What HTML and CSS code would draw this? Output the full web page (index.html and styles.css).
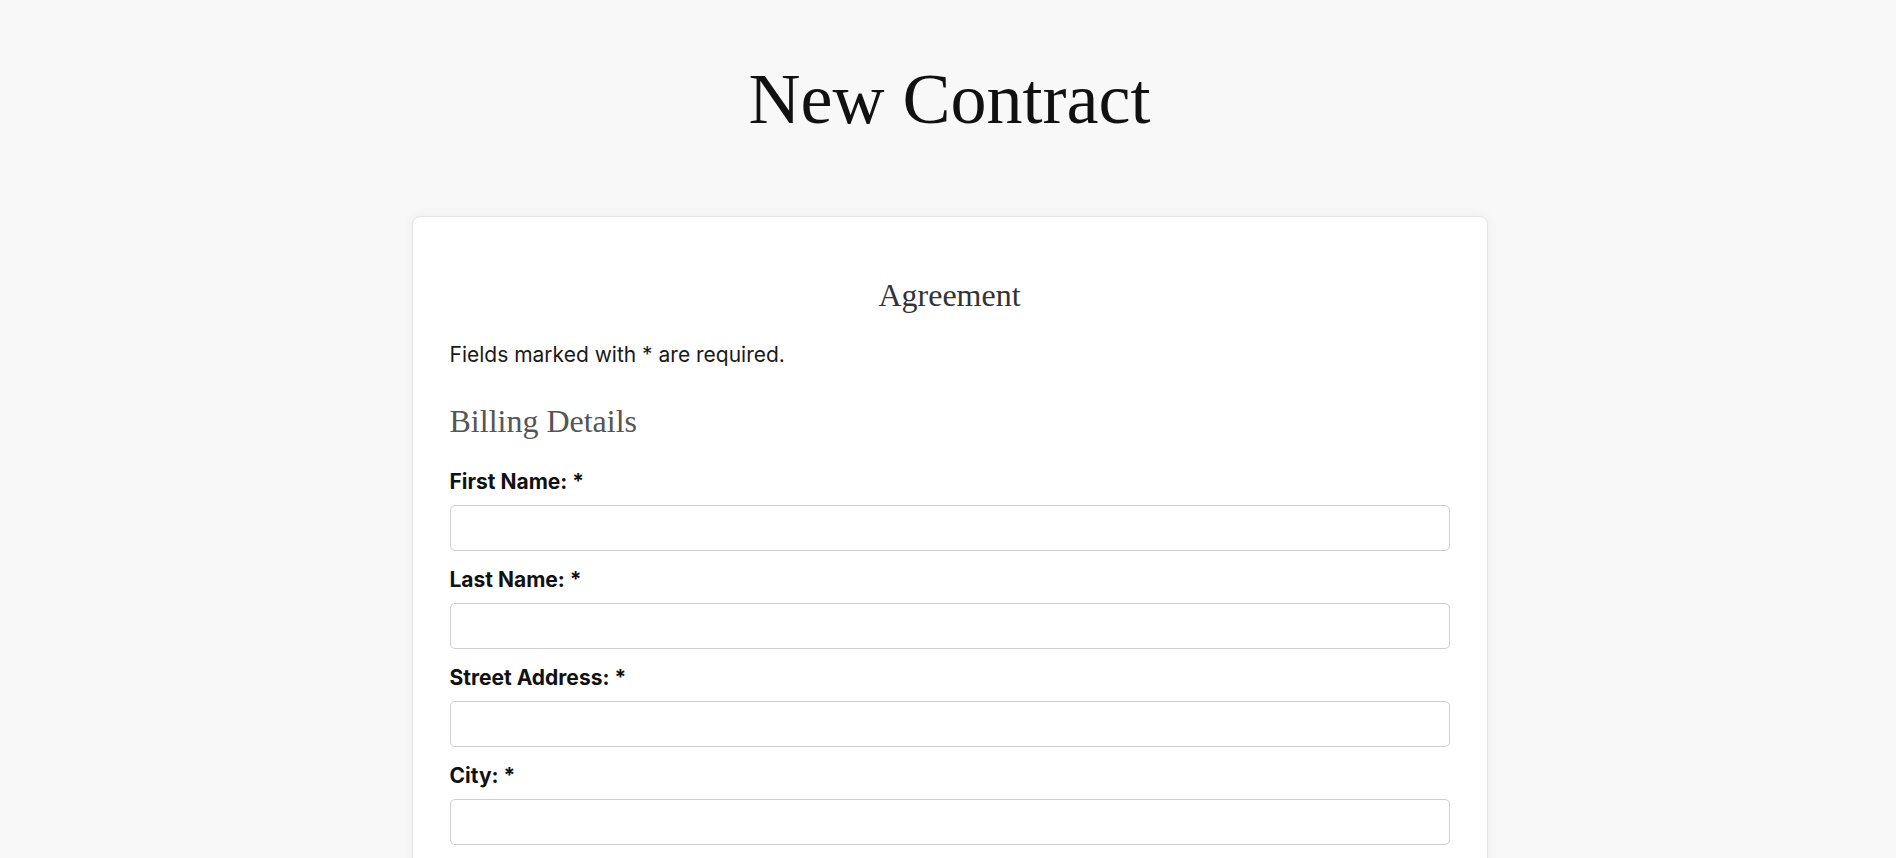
FILE: index.html
```html
<!DOCTYPE html>
<html lang="en">
<head>
<meta charset="utf-8">
<title>New Contract</title>
<link rel="stylesheet" href="styles.css">
</head>
<body>
<h1 class="page-title">New Contract</h1>
<main class="card">
  <h2 class="form-title">Agreement</h2>
  <p class="note">Fields marked with * are required.</p>
  <h3 class="section-title">Billing Details</h3>
  <div class="field">
    <label class="field-label" for="fn">First Name: *</label>
    <input class="field-input" id="fn" type="text">
  </div>
  <div class="field">
    <label class="field-label" for="ln">Last Name: *</label>
    <input class="field-input" id="ln" type="text">
  </div>
  <div class="field">
    <label class="field-label" for="st">Street Address: *</label>
    <input class="field-input" id="st" type="text">
  </div>
  <div class="field">
    <label class="field-label" for="ci">City: *</label>
    <input class="field-input" id="ci" type="text">
  </div>
</main>
</body>
</html>
```
FILE: styles.css
```css
html, body {
  margin: 0;
  padding: 0;
}
body {
  padding-left: 3px;
  background: #f8f8f8;
  font-family: Inter, "Liberation Sans", sans-serif;
  color: #111;
}
.page-title {
  margin: 0 0 77px;
  padding-top: 59px;
  font-family: "Liberation Serif", serif;
  font-weight: normal;
  font-size: 72px;
  line-height: 80px;
  text-align: center;
  color: #111;
}
.card {
  box-sizing: border-box;
  width: 1076px;
  margin: 0 auto;
  padding: 58px 37px 60px;
  background: #fff;
  border: 1px solid #e4e4e4;
  border-radius: 8px;
  box-shadow: 0 0 12px rgba(0, 0, 0, 0.05);
}
.form-title {
  margin: 0 0 26px;
  font-family: "Liberation Serif", serif;
  font-weight: normal;
  font-size: 32px;
  line-height: 40px;
  text-align: center;
  color: #333;
}
.note {
  margin: 0 0 32px;
  font-size: 21px;
  line-height: 28px;
  color: #1a1a1a;
}
.section-title {
  margin: 0 0 29px;
  font-family: "Liberation Serif", serif;
  font-weight: normal;
  font-size: 32px;
  line-height: 40px;
  color: #555;
}
.field {
  margin-bottom: 17px;
}
.field-label {
  display: block;
  margin-bottom: 11px;
  font-size: 21px;
  line-height: 24px;
  font-weight: 700;
  color: #111;
}
.field-input {
  display: block;
  box-sizing: border-box;
  width: 100%;
  height: 46px;
  margin: 0;
  padding: 0 12px;
  border: 1px solid #cfcfcf;
  border-radius: 5px;
  background: #fff;
  font-family: Inter, sans-serif;
  font-size: 18px;
}
```
